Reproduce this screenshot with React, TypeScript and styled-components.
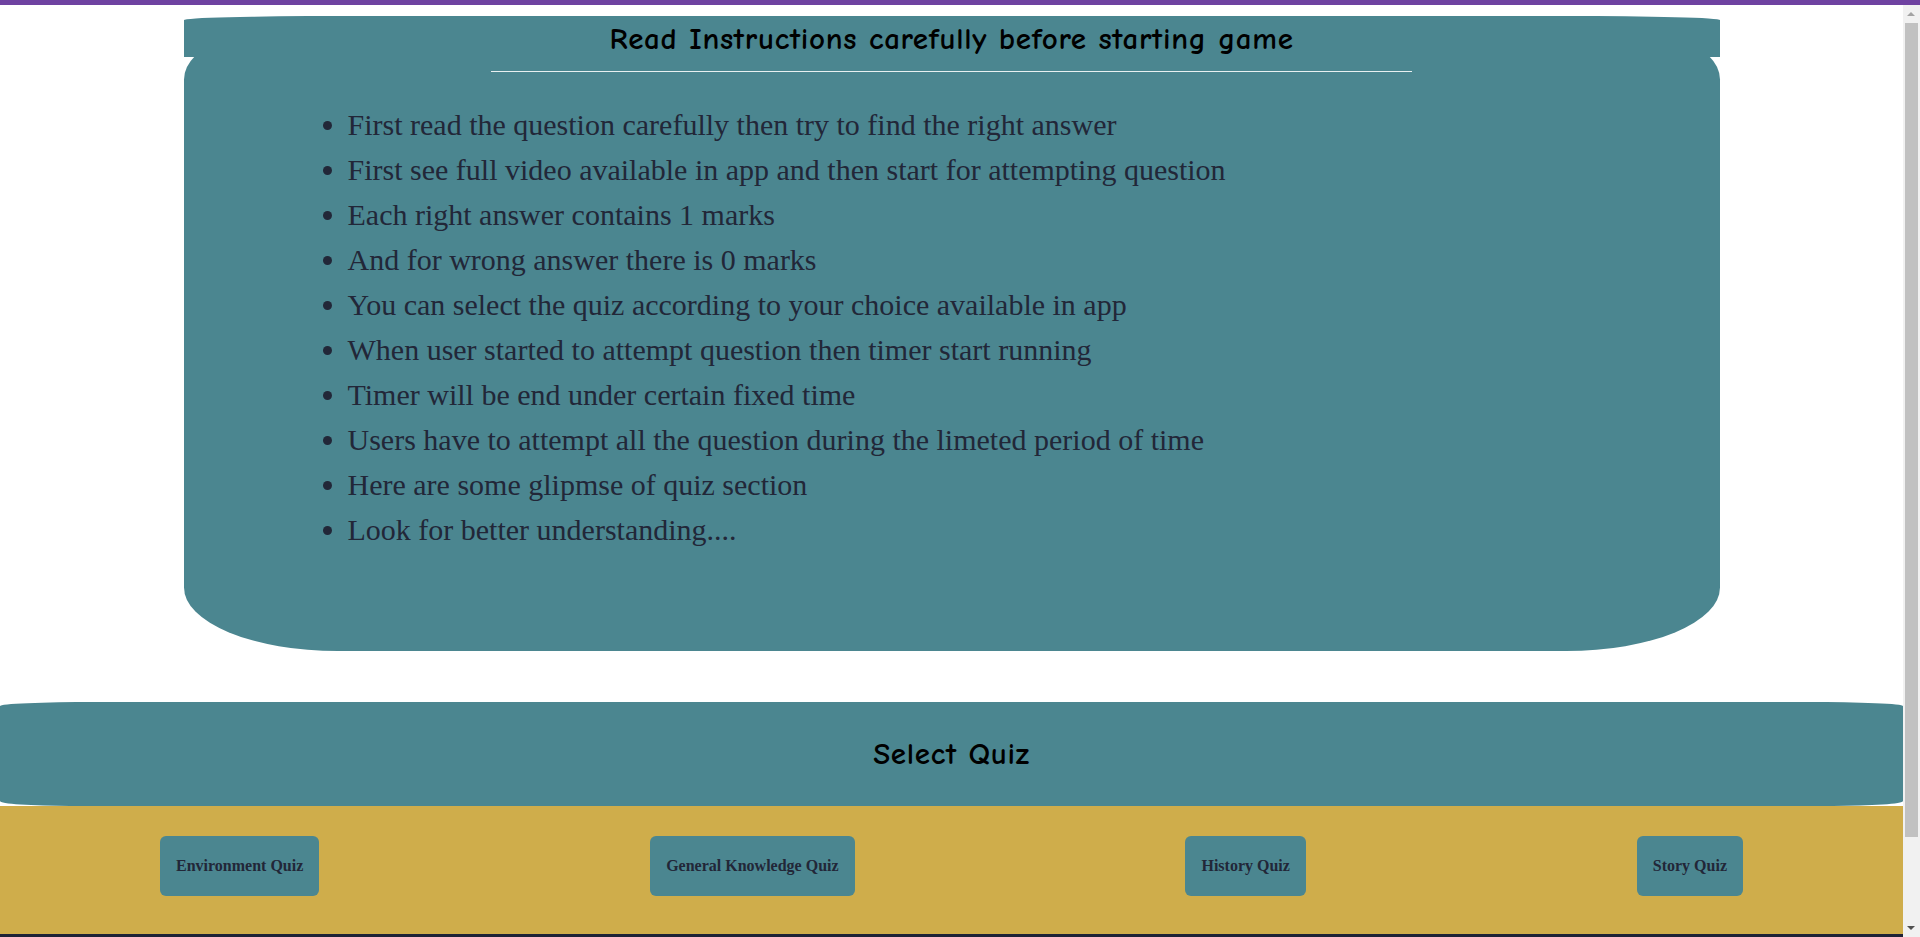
import React from "react";
import styled, { createGlobalStyle } from "styled-components";

const GlobalStyle = createGlobalStyle`
  html, body {
    margin: 0;
    padding: 0;
    background: #ffffff;
  }
  body {
    font-family: "Liberation Serif", "Times New Roman", serif;
  }
`;

const TEAL = "#4b8690";
const GOLD = "#cfad4b";
const INK = "#222738";
const HAND = `"Comic Sans MS", "Comic Neue", "Noto Sans", sans-serif`;

const TopBar = styled.div`
  height: 5px;
  background: #6f42a1;
`;

const Page = styled.main`
  margin-right: 17px;
  display: flex;
  flex-direction: column;
`;

/* Browser-style scrollbar lying over the right edge of the window */
const ScrollTrack = styled.aside`
  position: fixed;
  top: 5px;
  right: 0;
  bottom: 0;
  width: 17px;
  background: #f1f1f1;
  display: flex;
  flex-direction: column;
  align-items: center;

  &::before,
  &::after {
    content: "";
    position: absolute;
    left: 4px;
    width: 0;
    height: 0;
    border-left: 4px solid transparent;
    border-right: 4px solid transparent;
  }
  &::before {
    top: 7px;
    border-bottom: 4px solid #a3a3a3;
  }
  &::after {
    bottom: 7px;
    border-top: 4px solid #505050;
  }
`;

const ScrollThumb = styled.div`
  margin-top: 18px;
  width: 13px;
  height: 814px;
  background: #c1c1c1;
`;

const Card = styled.section`
  width: 1536px;
  margin: 11px auto 0;
  background: ${TEAL};
  border-radius: 10%;
  padding-bottom: 99px;
  display: flex;
  flex-direction: column;
  align-items: center;
`;

const Title = styled.h2`
  box-sizing: border-box;
  width: 100%;
  height: 41px;
  margin: 0;
  padding-top: 3px;
  background: ${TEAL};
  border-radius: 10% 10% 0 0;
  font-family: ${HAND};
  font-weight: 700;
  font-size: 31px;
  letter-spacing: 0.7px;
  line-height: 41px;
  color: #000;
  text-align: center;
  white-space: nowrap;
`;

const Divider = styled.hr`
  width: 60%;
  margin: 14px 0 0;
  border: 0;
  height: 1px;
  background: #e8f0f1;
`;

const List = styled.ul`
  align-self: stretch;
  margin: 30px 0 0;
  padding: 0 0 0 164px;
  list-style: disc;
  color: ${INK};
`;

const Item = styled.li`
  font-family: "Liberation Serif", "Times New Roman", serif;
  font-size: 30px;
  line-height: 45px;
  height: 45px;
`;

const Band = styled.div`
  margin-top: 51px;
  height: 104px;
  background: ${TEAL};
  border-radius: 95px 95px 70px 70px / 4px 4px 5px 5px;
  display: flex;
  align-items: center;
  justify-content: center;
`;

const BandTitle = styled.h2`
  margin: 0;
  font-family: ${HAND};
  font-weight: 700;
  font-size: 31px;
  letter-spacing: 0.7px;
  color: #000;
`;

const QuizRow = styled.div`
  background: ${GOLD};
  padding: 30px 160px 38px;
  display: flex;
  justify-content: space-between;
  align-items: center;
`;

const QuizButton = styled.button`
  height: 60px;
  padding: 0 16px;
  border: 0;
  border-radius: 6px;
  background: ${TEAL};
  color: ${INK};
  font-family: "Liberation Serif", "Times New Roman", serif;
  font-weight: 700;
  font-size: 16px;
  cursor: pointer;
`;

const Footer = styled.footer`
  height: 105px;
  background: #1e2236;
`;

const rules = [
  "First read the question carefully then try to find the right answer",
  "First see full video available in app and then start for attempting question",
  "Each right answer contains 1 marks",
  "And for wrong answer there is 0 marks",
  "You can select the quiz according to your choice available in app",
  "When user started to attempt question then timer start running",
  "Timer will be end under certain fixed time",
  "Users have to attempt all the question during the limeted period of time",
  "Here are some glipmse of quiz section",
  "Look for better understanding....",
];

const quizzes = [
  "Environment Quiz",
  "General Knowledge Quiz",
  "History Quiz",
  "Story Quiz",
];

export default function App() {
  return (
    <>
      <GlobalStyle />
      <TopBar />
      <Page>
        <Card>
          <Title>Read Instructions carefully before starting game</Title>
          <Divider />
          <List>
            {rules.map((r) => (
              <Item key={r}>{r}</Item>
            ))}
          </List>
        </Card>
        <Band>
          <BandTitle>Select Quiz</BandTitle>
        </Band>
        <QuizRow>
          {quizzes.map((q) => (
            <QuizButton key={q}>{q}</QuizButton>
          ))}
        </QuizRow>
        <Footer />
      </Page>
      <ScrollTrack aria-hidden="true">
        <ScrollThumb />
      </ScrollTrack>
    </>
  );
}
